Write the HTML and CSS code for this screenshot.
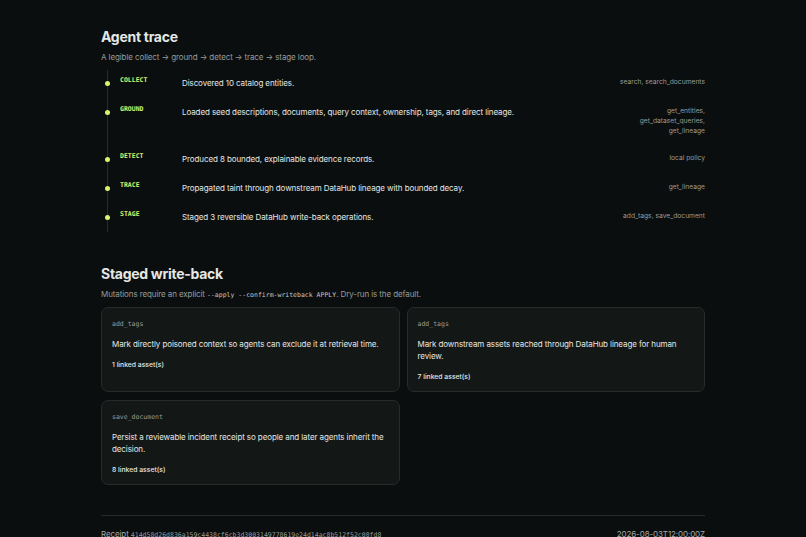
FILE: index.html
```html
<!DOCTYPE html>
<html lang="en">
<head>
  <meta charset="UTF-8" />
  <meta name="viewport" content="width=device-width, initial-scale=1.0" />
  <title>Agent trace</title>
  <link rel="stylesheet" href="styles.css">
</head>
<body>
  <main class="page">
    <section class="section">
      <h2>Agent trace</h2>
      <p class="lead">A legible collect → ground → detect → trace → stage loop.</p>

      <ol class="trace">
        <li class="step">
          <span class="step-name">COLLECT</span>
          <span class="step-text">Discovered 10 catalog entities.</span>
          <span class="step-tools">search, search_documents</span>
        </li>
        <li class="step">
          <span class="step-name">GROUND</span>
          <span class="step-text">Loaded seed descriptions, documents, query context, ownership, tags, and direct lineage.</span>
          <span class="step-tools">get_entities, get_dataset_queries, get_lineage</span>
        </li>
        <li class="step">
          <span class="step-name">DETECT</span>
          <span class="step-text">Produced 8 bounded, explainable evidence records.</span>
          <span class="step-tools">local policy</span>
        </li>
        <li class="step">
          <span class="step-name">TRACE</span>
          <span class="step-text">Propagated taint through downstream DataHub lineage with bounded decay.</span>
          <span class="step-tools">get_lineage</span>
        </li>
        <li class="step">
          <span class="step-name">STAGE</span>
          <span class="step-text">Staged 3 reversible DataHub write-back operations.</span>
          <span class="step-tools">add_tags, save_document</span>
        </li>
      </ol>
    </section>

    <section class="section section-ops">
      <h2>Staged write-back</h2>
      <p class="lead">Mutations require an explicit <code>--apply --confirm-writeback APPLY</code>. Dry-run is the default.</p>

      <div class="ops">
        <div class="op">
          <code class="op-name">add_tags</code>
          <p class="op-text">Mark directly poisoned context so agents can exclude it at retrieval time.</p>
          <span class="op-count">1 linked asset(s)</span>
        </div>
        <div class="op">
          <code class="op-name">add_tags</code>
          <p class="op-text">Mark downstream assets reached through DataHub lineage for human review.</p>
          <span class="op-count">7 linked asset(s)</span>
        </div>
        <div class="op">
          <code class="op-name">save_document</code>
          <p class="op-text">Persist a reviewable incident receipt so people and later agents inherit the decision.</p>
          <span class="op-count">8 linked asset(s)</span>
        </div>
      </div>
    </section>

    <footer class="receipt">
      <span>Receipt <code>414d58d26d836a159c4438cf6cb3d3003149778619e24d14ac8b512f52c08fd8</code></span>
      <span>2026-08-03T12:00:00Z</span>
    </footer>
  </main>
</body>
</html>
```

FILE: styles.css
```css
:root {
  --bg: #0b0e0e;
  --card: #131716;
  --border: #272c2b;
  --text: #e4e7e5;
  --muted: #979c9a;
  --lime: #d9f56b;
  --mono: 'DejaVu Sans Mono', 'Liberation Mono', monospace;
}
html {
  background: var(--bg);
}
body {
  margin: 0;
  background: var(--bg);
  color: var(--text);
  font-family: Inter, 'Noto Sans', sans-serif;
  font-size: 8px;
  line-height: 12px;
  letter-spacing: -0.1px;
}
.page {
  width: 604px;
  margin: 0 auto;
  padding-top: 27px;
}
.section {
  margin-bottom: 32px;
}
.section-ops {
  margin-bottom: 30px;
}
h2 {
  margin: 0;
  font-size: 14px;
  line-height: 19px;
  font-weight: 700;
  letter-spacing: -0.02em;
}
.lead {
  margin: 5px 0 0;
  color: var(--muted);
}
code {
  font-family: var(--mono);
  font-size: 6.5px;
  line-height: 1;
  letter-spacing: 0;
}
.lead code {
  color: #c4c8c6;
}

/* trace timeline */
.trace {
  list-style: none;
  margin: 7px 0 0;
  padding: 0 0 0 6px;
}
.step {
  position: relative;
  display: grid;
  grid-template-columns: 62px 1fr 100px;
  align-items: start;
  padding: 7px 0 10px 12px;
  border-left: 1px solid var(--border);
}
.step::before {
  content: '';
  position: absolute;
  left: -3px;
  top: 11px;
  width: 5px;
  height: 5px;
  border-radius: 50%;
  background: var(--lime);
}
.step-name {
  font-family: var(--mono);
  font-size: 6.5px;
  line-height: 7px;
  font-weight: 700;
  color: var(--lime);
  letter-spacing: 0;
}
.step-tools {
  text-align: right;
  font-size: 6.7px;
  line-height: 10px;
  color: var(--muted);
  letter-spacing: 0;
}
.step:last-child {
  padding-bottom: 9px;
}

/* staged operations */
.ops {
  display: grid;
  grid-template-columns: 1fr 1fr;
  gap: 8px 7px;
  margin-top: 7px;
}
.op {
  display: flex;
  flex-direction: column;
  align-items: flex-start;
  padding: 11px 10px 9px;
  background: var(--card);
  border: 1px solid var(--border);
  border-radius: 7px;
}
.op-name {
  line-height: 10px;
  color: var(--muted);
}
.op-text {
  margin: 9px 0 10px;
}
.op-count {
  font-size: 6.8px;
  line-height: 10px;
  font-weight: 500;
  letter-spacing: 0;
}

.receipt {
  display: flex;
  justify-content: space-between;
  align-items: baseline;
  border-top: 1px solid var(--border);
  padding-top: 12px;
  color: #a3a8a6;
}
.receipt code {
  color: var(--muted);
}
```
